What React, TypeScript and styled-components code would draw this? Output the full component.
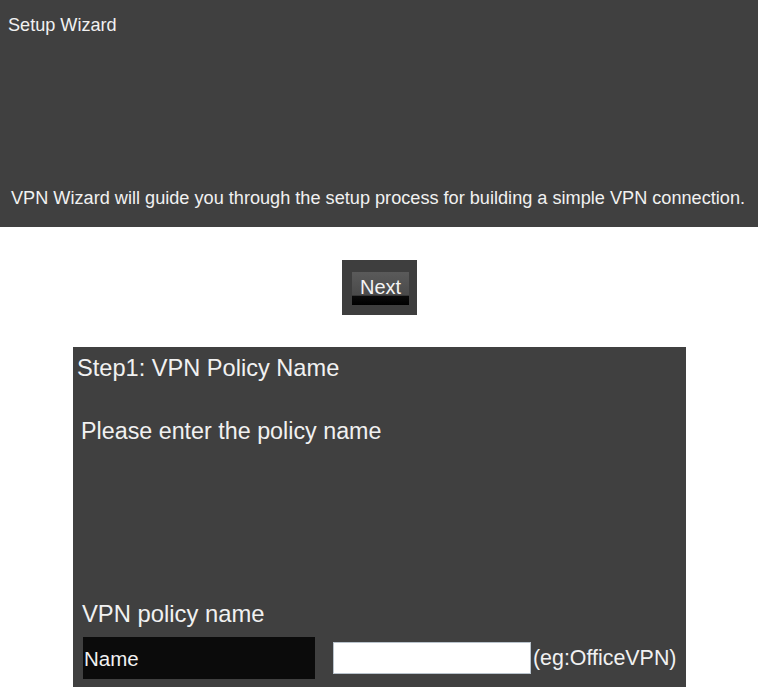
import React from "react";
import styled, { createGlobalStyle } from "styled-components";

const Global = createGlobalStyle`
  html, body { margin: 0; padding: 0; background: #ffffff; }
  body { font-family: "Liberation Sans", Arial, sans-serif; color: #f1f1f1; }
`;

const Page = styled.div`
  display: flex;
  flex-direction: column;
  align-items: center;
  width: 759px;
`;

const IntroPanel = styled.section`
  align-self: flex-start;
  box-sizing: border-box;
  width: 758px;
  height: 227px;
  background: #404040;
  display: flex;
  flex-direction: column;
  justify-content: space-between;
  padding: 15px 0 18px 0;
`;

const IntroTitle = styled.div`
  font-size: 18.1px;
  line-height: 21px;
  padding-left: 8px;
`;

const IntroText = styled.div`
  font-size: 18.15px;
  line-height: 21px;
  padding-left: 11px;
  white-space: nowrap;
`;

const ButtonFrame = styled.div`
  margin-top: 33px;
  background: #3e3e3e;
  padding: 12px 8px 10px 10px;
  display: flex;
`;

const NextButton = styled.button`
  width: 57px;
  height: 33px;
  border: none;
  padding: 0 0 7px 0;
  margin: 0;
  background: linear-gradient(
    to bottom,
    #5a5a5a 0%,
    #4a4a4a 70%,
    #0a0a0a 74%,
    #000000 100%
  );
  color: #f4f4f4;
  font-family: "Liberation Sans", Arial, sans-serif;
  font-size: 20px;
  line-height: 22px;
  display: flex;
  align-items: flex-end;
  justify-content: center;
  cursor: pointer;
`;

const StepPanel = styled.section`
  margin-top: 32px;
  box-sizing: border-box;
  width: 613px;
  background: #404040;
  padding: 8px 0 20px 4px;
  display: flex;
  flex-direction: column;
`;

const StepTitle = styled.div`
  font-size: 23.6px;
  line-height: 27px;
`;

const StepPrompt = styled.div`
  margin-top: 36px;
  padding-left: 4px;
  font-size: 23.3px;
  line-height: 27px;
`;

const FieldHeading = styled.div`
  margin-top: 155px;
  padding-left: 5px;
  font-size: 23.8px;
  line-height: 27px;
`;

const FieldRow = styled.div`
  margin-top: 10px;
  padding-left: 6px;
  display: flex;
  align-items: center;
`;

const FieldLabel = styled.div`
  box-sizing: border-box;
  width: 232px;
  height: 42px;
  background: #0b0b0b;
  padding-left: 1px;
  display: flex;
  align-items: center;
  font-size: 20.5px;
  line-height: 23px;
`;

const TextInput = styled.input`
  box-sizing: border-box;
  margin: 0 0 0 18px;
  width: 198px;
  height: 32px;
  border: 1px solid #b9c3cc;
  background: #ffffff;
  padding: 2px 4px;
  font-family: "Liberation Sans", Arial, sans-serif;
  font-size: 16px;
  outline: none;
`;

const Hint = styled.span`
  margin-left: 2px;
  font-size: 21.4px;
  line-height: 23px;
`;

export default function App() {
  return (
    <>
      <Global />
      <Page>
        <IntroPanel>
          <IntroTitle>Setup Wizard</IntroTitle>
          <IntroText>
            VPN Wizard will guide you through the setup process for building a simple VPN connection.
          </IntroText>
        </IntroPanel>
        <ButtonFrame>
          <NextButton type="button">Next</NextButton>
        </ButtonFrame>
        <StepPanel>
          <StepTitle>Step1: VPN Policy Name</StepTitle>
          <StepPrompt>Please enter the policy name</StepPrompt>
          <FieldHeading>VPN policy name</FieldHeading>
          <FieldRow>
            <FieldLabel>Name</FieldLabel>
            <TextInput type="text" />
            <Hint>(eg:OfficeVPN)</Hint>
          </FieldRow>
        </StepPanel>
      </Page>
    </>
  );
}
